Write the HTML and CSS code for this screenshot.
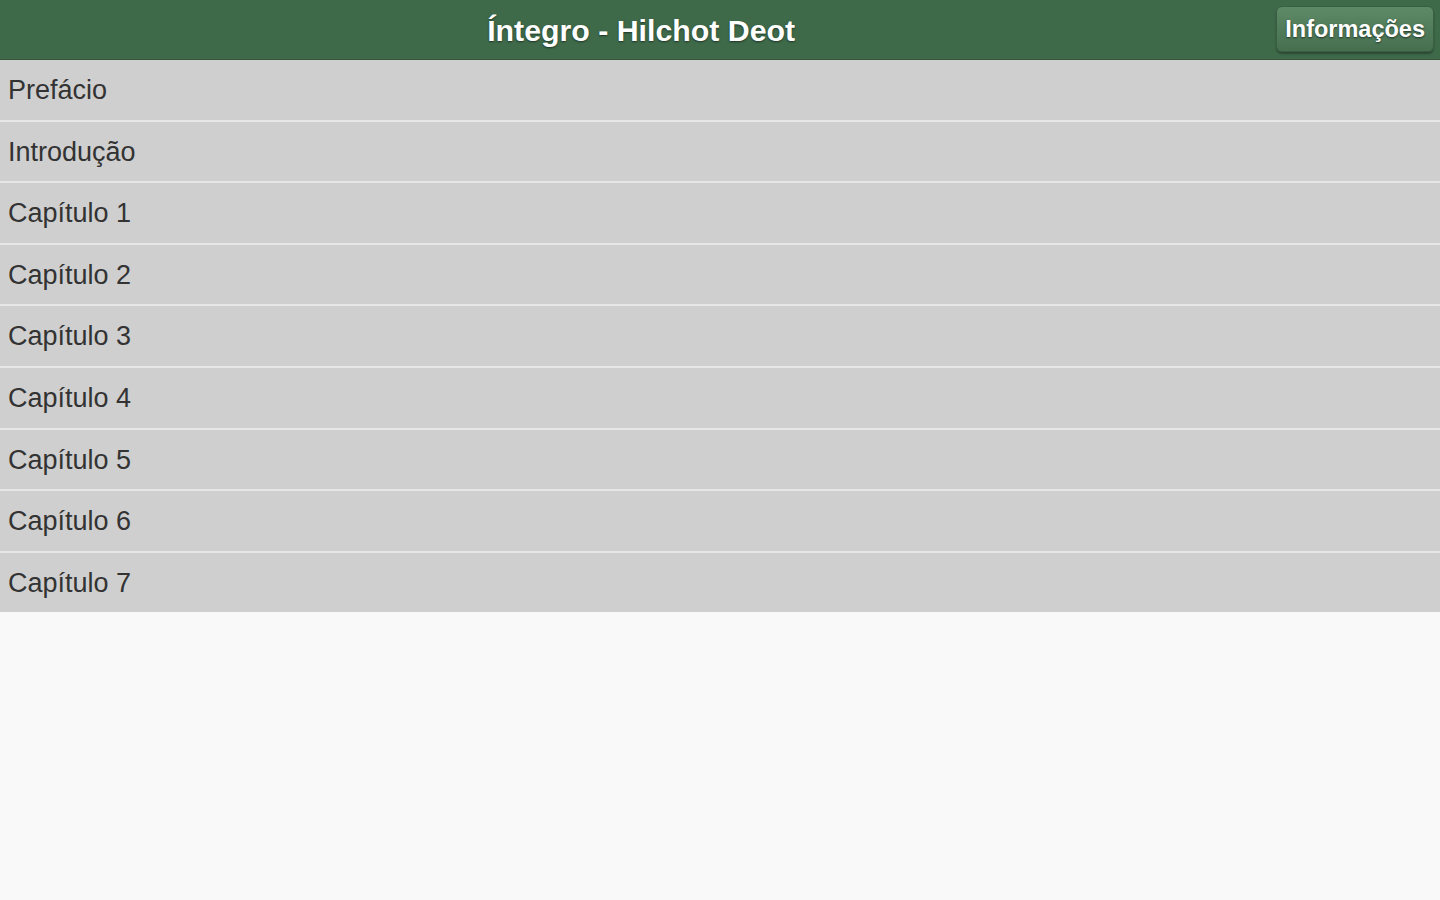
FILE: index.html
```html
<!DOCTYPE html>
<html lang="pt">
<head>
    <meta charset="UTF-8">
    <meta name="viewport" content="width=device-width, initial-scale=1.0">
    <title>Íntegro - Hilchot Deot</title>
    <link rel="stylesheet" href="styles.css">
</head>
<body>
    <div class="header">
        <h1 class="title">Íntegro - Hilchot Deot</h1>
        <a href="#" class="btn">Informações</a>
    </div>

    <ul class="list">
        <li><a href="#">Prefácio</a></li>
        <li><a href="#">Introdução</a></li>
        <li><a href="#">Capítulo 1</a></li>
        <li><a href="#">Capítulo 2</a></li>
        <li><a href="#">Capítulo 3</a></li>
        <li><a href="#">Capítulo 4</a></li>
        <li><a href="#">Capítulo 5</a></li>
        <li><a href="#">Capítulo 6</a></li>
        <li><a href="#">Capítulo 7</a></li>
    </ul>
</body>
</html>
```

FILE: styles.css
```css
body {
    margin: 0;
    background-color: #f9f9f9;
    font-family: "Liberation Sans", Arial, sans-serif;
    height: 100vh;
}

.header {
    display: flex;
    align-items: center;
    height: 59px;
    padding-right: 6px;
    background-color: #3e6a4a;
    border-bottom: 1px solid #35573e;
}

.title {
    flex: 1;
    margin: 0;
    padding-top: 2px;
    padding-left: 6px;
    text-align: center;
    font-size: 30.3px;
    font-weight: bold;
    color: #fff;
    text-shadow: 0 1px 2px #1f3526;
}

.btn {
    display: block;
    padding: 0 8px;
    height: 44px;
    line-height: 44px;
    margin-top: -2px;
    font-size: 23.5px;
    font-weight: bold;
    color: #fff;
    text-decoration: none;
    text-shadow: 0 1px 2px #1f3526;
    background: linear-gradient(#5d8a66, #466f50);
    border: 1px solid #3a5e42;
    border-radius: 6px;
    box-shadow: 0 2px 2px #2c4833;
}

.list {
    margin: 0;
    padding: 0;
    list-style: none;
}

.list li {
    height: 59.6px;
    background-color: #cfcfcf;
    border-bottom: 2px solid #e6e6e6;
}

.list li:last-child {
    border-bottom: none;
}

.list a {
    display: block;
    padding-left: 8px;
    line-height: 61px;
    font-size: 27px;
    color: #333;
    text-decoration: none;
}
```
